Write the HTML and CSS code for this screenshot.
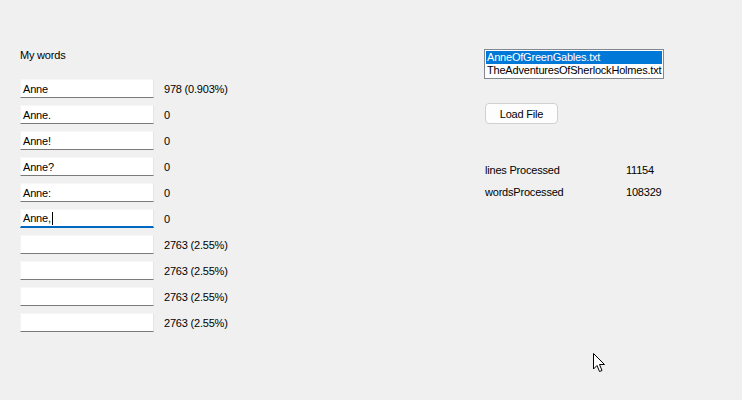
FILE: index.html
```html
<!DOCTYPE html>
<html>
<head>
<meta charset="utf-8">
<link rel="stylesheet" href="styles.css">
</head>
<body>
<div class="form">
  <div class="left">
    <div class="title">My words</div>
    <div class="rows">
      <div class="row"><div class="box">Anne</div><span class="count">978 (0.903%)</span></div>
      <div class="row"><div class="box">Anne.</div><span class="count">0</span></div>
      <div class="row"><div class="box">Anne!</div><span class="count">0</span></div>
      <div class="row"><div class="box">Anne?</div><span class="count">0</span></div>
      <div class="row"><div class="box">Anne:</div><span class="count">0</span></div>
      <div class="row"><div class="box active">Anne,<span class="caret"></span></div><span class="count">0</span></div>
      <div class="row"><div class="box"></div><span class="count">2763 (2.55%)</span></div>
      <div class="row"><div class="box"></div><span class="count">2763 (2.55%)</span></div>
      <div class="row"><div class="box"></div><span class="count">2763 (2.55%)</span></div>
      <div class="row"><div class="box"></div><span class="count">2763 (2.55%)</span></div>
    </div>
  </div>
  <div class="right">
    <div class="list">
      <div class="item selected">AnneOfGreenGables.txt</div>
      <div class="item">TheAdventuresOfSherlockHolmes.txt</div>
    </div>
    <div class="btn">Load File</div>
    <div class="stats">
      <div class="stat"><span class="slabel">lines Processed</span><span class="sval">11154</span></div>
      <div class="stat"><span class="slabel">wordsProcessed</span><span class="sval">108329</span></div>
    </div>
  </div>
  <svg class="cursor" width="14" height="22" viewBox="0 0 14 22">
    <path d="M1.5 1.5 L1.5 17 L5 13.5 L7.5 19.5 L10 18.5 L7.5 12.5 L12.5 12.5 Z" fill="#fff" stroke="#000" stroke-width="1" stroke-linejoin="miter"/>
  </svg>
</div>
</body>
</html>
```
FILE: styles.css
```css
html, body {
  margin: 0;
  padding: 0;
  background: #f0f0f0;
}
body {
  width: 742px;
  height: 400px;
  overflow: hidden;
  font-family: "Liberation Sans", Arial, sans-serif;
  font-size: 11px;
  letter-spacing: -0.2px;
  color: #000;
}
.form {
  position: relative;
  display: flex;
  width: 742px;
  height: 400px;
}
.left {
  padding: 47px 0 0 20px;
  width: 464px;
}
.title {
  height: 16px;
  line-height: 16px;
}
.rows {
  margin-top: 16px;
  display: flex;
  flex-direction: column;
  gap: 7px;
}
.row {
  display: flex;
  align-items: center;
  height: 19px;
}
.box {
  box-sizing: border-box;
  width: 134px;
  height: 19px;
  background: #fff;
  border-bottom: 1px solid #7a7a7a;
  border-left: 1px solid #f4f4f4;
  border-right: 1px solid #e4e4e4;
  border-top: 1px solid #f7f7f7;
  padding-left: 2px;
  line-height: 16px;
  display: flex;
  align-items: center;
}
.box.active {
  border-bottom: 2px solid #0067c0;
}
.caret {
  display: inline-block;
  width: 1px;
  height: 13px;
  background: #000;
  margin-left: 1px;
}
.count {
  margin-left: 10px;
}
.right {
  padding-top: 49px;
  display: flex;
  flex-direction: column;
  align-items: flex-start;
}
.list {
  box-sizing: border-box;
  width: 180px;
  height: 30px;
  border: 1px solid #828790;
  background: #fff;
  padding: 1px;
}
.item {
  height: 13px;
  line-height: 13px;
  padding-left: 1px;
  white-space: nowrap;
}
.item.selected {
  background: #0078d7;
  color: #fff;
}
.btn {
  box-sizing: border-box;
  margin-top: 24px;
  margin-left: 1px;
  width: 73px;
  height: 21px;
  border: 1px solid #d0d0d0;
  border-radius: 4px;
  background: #fdfdfd;
  display: flex;
  align-items: center;
  justify-content: center;
}
.stats {
  margin-top: 38px;
  margin-left: 1px;
  display: flex;
  flex-direction: column;
  gap: 6px;
}
.stat {
  display: flex;
  height: 16px;
  line-height: 16px;
}
.slabel {
  width: 141px;
}
.cursor {
  position: absolute;
  left: 592px;
  top: 352px;
}
```
